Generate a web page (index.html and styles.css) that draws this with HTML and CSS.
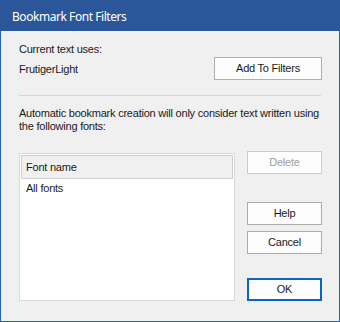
FILE: index.html
```html
<!DOCTYPE html>
<html>
<head>
<meta charset="utf-8">
<link rel="stylesheet" href="styles.css">
</head>
<body>
<div class="window">
  <div class="titlebar"><span class="title">Bookmark Font Filters</span></div>
  <div class="content">
    <div class="label first">Current text uses:</div>
    <div class="row">
      <div class="label font-current">FrutigerLight</div>
      <button class="btn wide">Add To Filters</button>
    </div>
    <div class="sep"></div>
    <p class="para">Automatic bookmark creation will only consider text written using the following fonts:</p>
    <div class="lower">
      <div class="list">
        <div class="list-header">Font name</div>
        <div class="list-item">All fonts</div>
      </div>
      <div class="buttons">
        <button class="btn disabled">Delete</button>
        <button class="btn help">Help</button>
        <button class="btn cancel">Cancel</button>
        <button class="btn ok">OK</button>
      </div>
    </div>
  </div>
</div>
</body>
</html>
```
FILE: styles.css
```css
html, body {
  margin: 0;
  padding: 0;
  background: #f0f0f0;
}
.window {
  width: 340px;
  height: 322px;
  box-sizing: border-box;
  border: 1px solid #1f62c2;
  border-top: none;
  background: #f0f0f0;
  display: flex;
  flex-direction: column;
  font-family: "Liberation Sans", Arial, sans-serif;
  font-size: 11px;
  letter-spacing: -0.22px;
  color: #1a1a1a;
}
.titlebar {
  height: 31px;
  margin: 0 -1px;
  background: #2b579a;
  display: flex;
  align-items: flex-start;
}
.title {
  font-family: "Noto Sans", "Open Sans", sans-serif;
  font-size: 12px;
  letter-spacing: -0.45px;
  color: #fff;
  line-height: 16px;
  margin-top: 9px;
  margin-left: 12px;
}
.content {
  padding: 0 17px 0 18px;
  display: flex;
  flex-direction: column;
}
.label {
  line-height: 13px;
}
.first {
  margin-top: 12px;
}
.row {
  margin-top: 1px;
  display: flex;
  justify-content: space-between;
  align-items: flex-start;
}
.font-current {
  margin-top: 6px;
}
.btn {
  font-family: "Liberation Sans", Arial, sans-serif;
  font-size: 11px;
  letter-spacing: -0.22px;
  color: #1a1a1a;
  background: #fdfdfd;
  border: 1px solid #adadad;
  height: 23px;
  width: 75px;
  padding: 0;
  margin: 0;
  box-sizing: border-box;
  line-height: 21px;
  text-align: center;
}
.wide {
  width: 108px;
}
.sep {
  margin-top: 15px;
  height: 1px;
  margin-right: 1px;
  background: #d5d5d5;
}
.para {
  margin: 11px 0 0 0;
  line-height: 13px;
}
.lower {
  margin-top: 18px;
  display: grid;
  grid-template-columns: 216px 75px;
  column-gap: 12px;
}
.list {
  margin-top: 2px;
  height: 148px;
  box-sizing: border-box;
  border: 1px solid #d9d9d9;
  background: #fff;
  padding: 1px;
}
.list-header {
  height: 24px;
  box-sizing: border-box;
  border: 1px solid #d0d0d0;
  background: #f0f0f0;
  padding-left: 4px;
  line-height: 22px;
}
.list-item {
  margin-top: 3px;
  padding-left: 5px;
  line-height: 13px;
}
.buttons {
  display: flex;
  flex-direction: column;
}
.disabled {
  color: #a0a0a0;
  border-color: #cccccc;
}
.help {
  margin-top: 28px;
}
.cancel {
  margin-top: 6px;
}
.ok {
  margin-top: 24px;
  border: 2px solid #0a64c8;
  line-height: 19px;
}
```
